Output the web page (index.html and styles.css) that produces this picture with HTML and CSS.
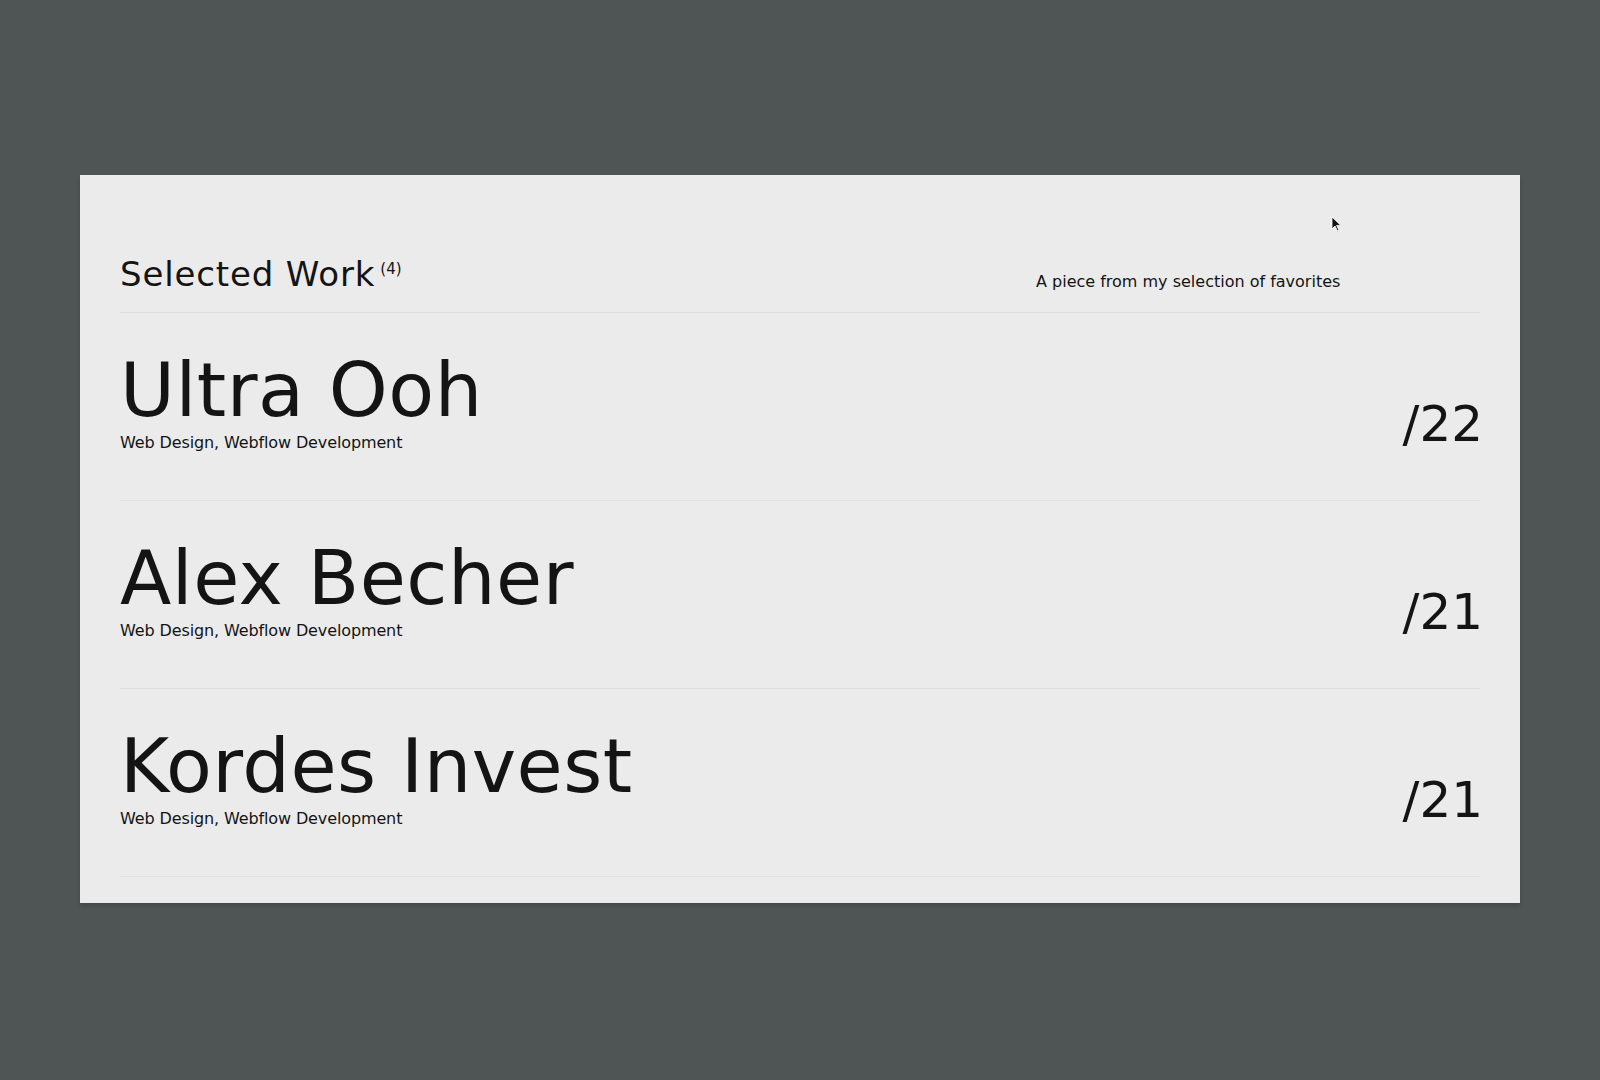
FILE: index.html
```html
<!DOCTYPE html>
<html>

<head>
    <title>Selected Work</title>
    <link rel="stylesheet" href="styles.css">
</head>

<body>
    <main class="stage">
        <section class="work">
            <header class="work-head">
                <h2 class="work-title">Selected Work<span class="count">(4)</span></h2>
                <p class="work-note">A piece from my selection of favorites</p>
            </header>

            <div class="project">
                <div class="project-info">
                    <h3 class="project-name">Ultra Ooh</h3>
                    <p class="project-tags">Web Design, Webflow Development</p>
                </div>
                <span class="project-year">/22</span>
            </div>

            <div class="project">
                <div class="project-info">
                    <h3 class="project-name">Alex Becher</h3>
                    <p class="project-tags">Web Design, Webflow Development</p>
                </div>
                <span class="project-year">/21</span>
            </div>

            <div class="project">
                <div class="project-info">
                    <h3 class="project-name">Kordes Invest</h3>
                    <p class="project-tags">Web Design, Webflow Development</p>
                </div>
                <span class="project-year">/21</span>
            </div>

            <svg class="cursor" width="11" height="16" viewBox="0 0 11 16">
                <path d="M1 1 L1 13 L4 10 L6.5 15 L8 14.3 L5.6 9.4 L9.8 9.4 Z" fill="#111" stroke="#fff" stroke-width="0.8"/>
            </svg>
        </section>
    </main>
</body>

</html>
```

FILE: styles.css
```css
body {
    margin: 0;
    padding: 0;
    background-color: #4f5555;
    font-family: "DejaVu Sans", "Liberation Sans", sans-serif;
    color: #141414;
}

.stage {
    padding: 175px 80px 177px 80px;
}

.work {
    position: relative;
    background-color: #ebebeb;
    padding: 82px 40px 26px 40px;
    box-shadow: 0 3px 4px rgba(0, 0, 0, 0.15);
}

.work-head {
    display: flex;
    align-items: flex-end;
    justify-content: space-between;
    padding-bottom: 21px;
    border-bottom: 1px solid #dedede;
}

.work-title {
    margin: 0;
    font-size: 34px;
    font-weight: 400;
    line-height: 1;
    letter-spacing: 0.85px;
}

.count {
    display: inline-block;
    vertical-align: top;
    font-size: 15px;
    line-height: 1;
    padding-top: 5px;
    margin-left: 5px;
    letter-spacing: 0;
}

.work-note {
    margin: 0;
    width: 444px;
    font-size: 16px;
    line-height: 18px;
}

.project {
    display: flex;
    justify-content: space-between;
    align-items: flex-end;
    padding: 40px 0 48px 0;
    border-bottom: 1px solid #dedede;
}

.project-name {
    margin: 0;
    font-size: 75px;
    font-weight: 400;
    line-height: 1;
    letter-spacing: 0.5px;
}

.project-tags {
    margin: 6px 0 0 0;
    font-size: 16px;
    line-height: 18px;
    letter-spacing: -0.12px;
}

.project-year {
    font-size: 50px;
    line-height: 1;
    margin: 0 -3px 3px 0;
}

.cursor {
    position: absolute;
    left: 1251px;
    top: 41px;
}
```
